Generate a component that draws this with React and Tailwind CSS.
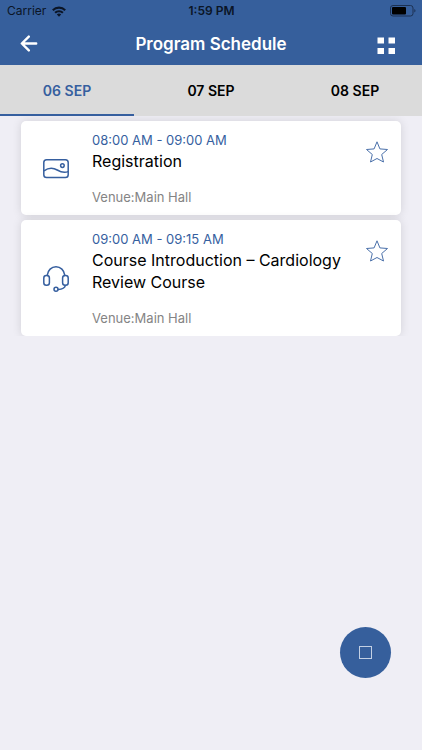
"use client";
import { useState } from "react";

const days = ["06 SEP", "07 SEP", "08 SEP"];

const sessions = [
  { time: "08:00 AM - 09:00 AM", title: "Registration", venue: "Main Hall", icon: PictureIcon },
  {
    time: "09:00 AM - 09:15 AM",
    title: "Course Introduction – Cardiology Review Course",
    venue: "Main Hall",
    icon: HeadsetIcon,
  },
];

function WifiIcon() {
  return (
    <svg width="14" height="11" viewBox="0 0 14 11" fill="none" stroke="#0b1526" strokeWidth="2.1">
      <path d="M0.8 4.2a8.8 8.8 0 0 1 12.4 0" />
      <path d="M3.1 6.8a5.5 5.5 0 0 1 7.8 0" />
      <path d="M7 10.8L4.8 8.6a3.1 3.1 0 0 1 4.4 0z" fill="#0b1526" stroke="none" />
    </svg>
  );
}

function BatteryIcon() {
  return (
    <svg width="26" height="12" viewBox="0 0 26 12">
      <rect x="0.5" y="0.5" width="22.5" height="10.5" rx="2.5" fill="none" stroke="#1c3152" />
      <rect x="2" y="2" width="14" height="7.5" rx="1" fill="#000" />
      <path d="M24.3 4v3.6c1.6-.6 1.6-3 0-3.6z" fill="#1c3152" />
    </svg>
  );
}

function PictureIcon() {
  return (
    <svg width="26" height="26" viewBox="0 0 26 26" fill="none" stroke="#365f9f" strokeWidth="1.5">
      <rect x="0.8" y="3.8" width="24.4" height="17.8" rx="2.8" />
      <circle cx="19.4" cy="9.6" r="1.8" />
      <path d="M1 14.8c4.4-3.2 9-3.4 13.2-.8 4 2.4 7.4 3 11 1.6" />
    </svg>
  );
}

function HeadsetIcon() {
  return (
    <svg width="26" height="26" viewBox="0 0 26 26" fill="none" stroke="#365f9f" strokeWidth="1.5" strokeLinecap="round">
      <rect x="0.8" y="9.6" width="5.6" height="9.6" rx="2.5" />
      <rect x="19.6" y="9.6" width="5.6" height="9.6" rx="2.5" />
      <path d="M4.2 9.4C4.8 4.2 8.4 0.8 13 0.8s8.2 3.4 8.8 8.6" />
      <path d="M22.4 19.4c-.6 2.8-3.4 3.9-7.2 4" />
      <circle cx="13" cy="23.2" r="2" />
    </svg>
  );
}

function SessionCard({ session }) {
  const [starred, setStarred] = useState(false);
  const Icon = session.icon;

  return (
    <li className="flex items-center rounded-[5px] bg-white pl-[22px] pr-[13px] pt-[9px] pb-2 shadow-[0_0_10px_rgba(0,0,0,0.12)]">
      <Icon />
      <div className="ml-[23px] flex-1">
        <p className="text-[13px] leading-5 text-[#365f9f]">{session.time}</p>
        <h2 className="text-[16px] leading-[22px] text-black">{session.title}</h2>
        <p className="mt-[15px] text-[13px] leading-5 text-[#848484]">Venue:{session.venue}</p>
      </div>
      <button
        onClick={() => setStarred(!starred)}
        aria-label="Add to favourites"
        aria-pressed={starred}
        className="mt-[11px] self-start"
      >
        <svg width="22" height="22" viewBox="0 0 22 22" fill={starred ? "#365f9f" : "none"} stroke="#4a70aa">
          <path d="M11 0.8l2.9 7.1 7.6.6-5.8 5 1.8 7.5-6.5-3.5-6.5 3.5 1.8-7.5-5.800-5 7.600-.6z" />
        </svg>
      </button>
    </li>
  );
}

export default function App() {
  const [activeDay, setActiveDay] = useState(0);

  return (
    <div className="flex min-h-screen flex-col bg-[#efeef5] font-['Inter',sans-serif]">
      {/* Header */}
      <header className="bg-[#365f9c]">
        <div className="grid h-[22px] grid-cols-3 items-center pl-[7px] pr-[6px] text-[12px] leading-4 text-[#0b1526]">
          <div className="flex items-center gap-[6px]">
            <span>Carrier</span>
            <WifiIcon />
          </div>
          <span className="text-center font-semibold">1:59 PM</span>
          <div className="flex justify-end">
            <BatteryIcon />
          </div>
        </div>
        <div className="grid h-[43px] grid-cols-[1fr_auto_1fr] items-center pl-5 pr-5">
          <button aria-label="Back" className="justify-self-start">
            <svg width="18" height="18" viewBox="0 0 18 18" fill="none" stroke="#fff" strokeWidth="2.4" strokeLinecap="round" strokeLinejoin="round">
              <path d="M16.2 8.5H2M8.8 1.6L1.8 8.5l7 6.9" />
            </svg>
          </button>
          <h1 className="text-[17px] leading-6 font-semibold text-white">Program Schedule</h1>
          <button aria-label="Menu" className="mr-[7px] justify-self-end">
            <svg width="18" height="20" viewBox="0 0 18 20" fill="#fff">
              <path d="M0.5 3.5H7v6H0.5zM11.5 3.5H18v6H11.5zM0.5 14H7v6H0.5zM11.5 14H18v6H11.5z" />
            </svg>
          </button>
        </div>
      </header>

      {/* Day tabs */}
      <nav className="grid grid-cols-3 gap-[10px] bg-[#dbdbdb]">
        {days.map((day, index) => (
          <button
            key={day}
            onClick={() => setActiveDay(index)}
            className={`h-[51px] border-b-2 pt-[2px] text-[14px] leading-5 font-semibold ${
              activeDay === index ? "border-[#365f9f] text-[#365f9f]" : "border-transparent text-black"
            }`}
          >
            {day}
          </button>
        ))}
      </nav>

      {/* Sessions */}
      <main className="flex flex-1 flex-col justify-between">
        <ul className="flex flex-col gap-[5px] overflow-hidden px-[21px] pt-[5px]">
          {sessions.map((session) => (
            <SessionCard key={session.time} session={session} />
          ))}
        </ul>
        <button
          aria-label="Stop"
          className="mr-[31px] mb-[72px] flex size-[51px] items-center justify-center self-end rounded-full bg-[#365f9c]"
        >
          <span className="size-[13px] border border-[#c3d0e4]" />
        </button>
      </main>
    </div>
  );
}
